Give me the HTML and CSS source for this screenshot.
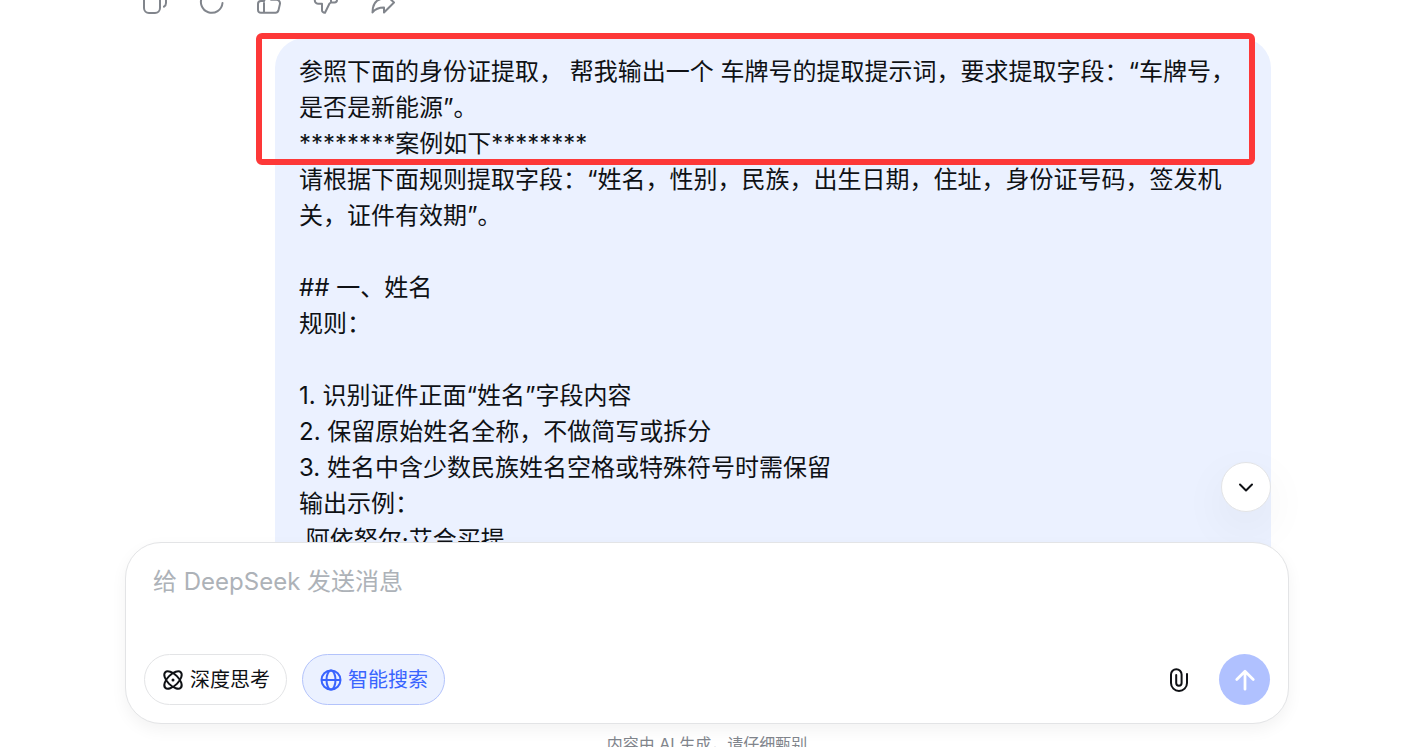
FILE: index.html
```html
<!DOCTYPE html>
<html lang="zh-CN">
<head>
    <meta charset="UTF-8">
    <meta name="viewport" content="width=device-width, initial-scale=1.0">
    <title>DeepSeek</title>
    <link rel="stylesheet" href="styles.css">
</head>
<body>

    <main class="chat">
        <div class="actions">
            <button class="icon-btn" aria-label="复制">
                <svg viewBox="0 0 24 24"><rect x="1" y="5" width="16" height="18" rx="5"/><path d="M8 1.5h10a5 5 0 0 1 5 5V13a4.5 4.5 0 0 1-2 3.700"/></svg>
            </button>
            <button class="icon-btn" aria-label="重新生成">
                <svg viewBox="0 0 24 24"><path d="M22.5 13A10.8 10.8 0 1 1 19.5 4.5M20 0v5h-5"/></svg>
            </button>
            <button class="icon-btn" aria-label="喜欢">
                <svg viewBox="0 0 24 24"><path d="M7 22.8h11.500a3 3 0 0 0 2.900-2.200l1.500-6.500a3.500 3.500 0 0 0-3.400-4.300H14V5a3 3 0 0 0-3-3L7 11H4a3 3 0 0 0-3 3v6a3 3 0 0 0 3 2.800h3zM7 13v9.500"/></svg>
            </button>
            <button class="icon-btn" aria-label="不喜欢">
                <svg viewBox="0 0 24 24"><path d="M17 1.500H5.500A3 3 0 0 0 2.600 4L1 9.500a3.200 3.200 0 0 0 3 4.200h4V20a2.700 2.700 0 0 0 3 2.800l4.500-9.300 1.500-1h3.500a2.500 2.500 0 0 0 2.500-2.500V4.500a3 3 0 0 0-3-3h-3zM17 1.500v10"/></svg>
            </button>
            <button class="icon-btn" aria-label="分享">
                <svg viewBox="0 0 24 24"><path d="M13 3l10 9.500L13 22.500v-5c-5 0-8.500 1-11.500 5C1.500 14 5 9 13 8.500z"/></svg>
            </button>
        </div>

        <div class="message">
            <div class="bubble">参照下面的身份证提取， 帮我输出一个 车牌号的提取提示词，要求提取字段：“车牌号，是否是新能源”。
********案例如下********
请根据下面规则提取字段：“姓名，性别，民族，出生日期，住址，身份证号码，签发机关，证件有效期”。

## 一、姓名
规则：

1. 识别证件正面“姓名”字段内容
2. 保留原始姓名全称，不做简写或拆分
3. 姓名中含少数民族姓名空格或特殊符号时需保留
输出示例：
 阿依努尔·艾合买提</div>
            <div class="highlight"></div>
        </div>
    </main>

    <div class="dock">
        <button class="scroll-btn" aria-label="滚动到底部">
            <svg viewBox="0 0 16 16"><path d="M2 5.500l6 6 6-6"/></svg>
        </button>

        <form class="composer">
            <textarea class="input" rows="2" aria-label="消息" placeholder="给 DeepSeek 发送消息"></textarea>
            <div class="toolbar">
                <button type="button" class="chip">
                    <svg viewBox="0 0 20 20">
                        <ellipse cx="10" cy="10" rx="11" ry="5.500" transform="rotate(45 10 10)"/>
                        <ellipse cx="10" cy="10" rx="11" ry="5.500" transform="rotate(-45 10 10)"/>
                        <circle class="dot" cx="10" cy="10" r="1.500"/>
                    </svg>
                    <span>深度思考</span>
                </button>
                <button type="button" class="chip active">
                    <svg viewBox="0 0 20 20"><circle cx="10" cy="10" r="9.500"/><ellipse cx="10" cy="10" rx="4.500" ry="9.500"/><path d="M1 10h18"/></svg>
                    <span>智能搜索</span>
                </button>
                <button type="button" class="attach-btn" aria-label="上传附件">
                    <svg viewBox="0 0 20 24"><path d="M18 6v9a8 8 0 0 1-16 0V6.500a5.300 5.300 0 0 1 10.600 0V15a2.700 2.700 0 0 1-5.400 0V7"/></svg>
                </button>
                <button type="button" class="send-btn" aria-label="发送">
                    <svg viewBox="0 0 24 24"><path d="M12 22V2.500M3 11.500l9-9 9 9"/></svg>
                </button>
            </div>
        </form>

        <p class="notice">内容由 AI 生成，请仔细甄别</p>
    </div>

</body>
</html>
```
FILE: styles.css
```css
* {
    margin: 0;
    padding: 0;
    box-sizing: border-box;
}

body {
    height: 100vh;
    padding: 0 116px 0 125px;
    display: flex;
    flex-direction: column;
    overflow: hidden;
    background: #fff;
    color: #0f1115;
    font-family: Inter, "Noto Sans CJK SC", sans-serif;
    font-size: 24px;
    line-height: 36px;
}

button, textarea {
    border: none;
    background: none;
    font: inherit;
    color: inherit;
    outline: none;
}

button {
    display: flex;
    align-items: center;
    justify-content: center;
    cursor: pointer;
}

svg {
    display: block;
    overflow: visible;
    fill: none;
    stroke: currentColor;
    stroke-width: 2;
    stroke-linecap: round;
    stroke-linejoin: round;
}

.chat {
    flex: 1;
    min-height: 0;
    padding: 0 18px;
    overflow: hidden;
}

/* the list is scrolled, so the action row is partly out of view */
.actions {
    display: flex;
    gap: 33px;
    margin: -10px 0 24px;
    color: #81858c;
}

.icon-btn svg {
    width: 24px;
    height: 24px;
}

.message {
    position: relative;
    margin-left: 132px;
}

.bubble {
    padding: 16px 24px 48px;
    border-radius: 30px;
    background: #ebf1ff;
    white-space: pre-wrap;
}

.highlight {
    position: absolute;
    top: -5px;
    left: -19px;
    right: 16px;
    height: 132px;
    border: 6px solid #fd3838;
    border-radius: 6px;
}

.dock {
    position: relative;
    margin: -36px 0 -9px;
}

.scroll-btn {
    position: absolute;
    top: -80px;
    right: 18px;
    width: 50px;
    height: 50px;
    border: 1px solid #e3e4e6;
    border-radius: 50%;
    background: #fff;
    box-shadow: 0 16px 48px rgba(0, 0, 0, 0.06);
}

.scroll-btn svg {
    width: 16px;
    height: 16px;
}

.composer {
    position: relative;
    padding: 21px 18px 18px;
    border: 1px solid #e3e4e6;
    border-radius: 36px;
    background: #fff;
    box-shadow: 0 6px 16px rgba(0, 0, 0, 0.05);
}

.input {
    display: block;
    width: 100%;
    height: 72px;
    padding: 0 9px;
    margin-bottom: 18px;
    resize: none;
}

.input::placeholder {
    color: #adb2b8;
}

.toolbar {
    display: flex;
    align-items: center;
    gap: 15px;
}

.chip {
    height: 51px;
    padding: 0 16px 0 18px;
    gap: 7px;
    border: 1px solid #e3e4e6;
    border-radius: 26px;
    font-size: 20px;
}

.chip svg {
    width: 20px;
    height: 20px;
}

.chip .dot {
    fill: currentColor;
    stroke: none;
}

.chip.active {
    border-color: #b3c3fb;
    background: #ebf1ff;
    color: #3964fe;
}

.attach-btn {
    width: 50px;
    height: 50px;
    margin-left: auto;
}

.attach-btn svg {
    width: 20px;
    height: 24px;
}

.send-btn {
    width: 51px;
    height: 51px;
    border-radius: 50%;
    background: #b0c1ff;
    color: #fff;
}

.send-btn svg {
    width: 22px;
    height: 22px;
    stroke-width: 3;
}

.notice {
    padding-top: 8px;
    font-size: 16px;
    line-height: 24px;
    text-align: center;
    color: #81858c;
}
```
